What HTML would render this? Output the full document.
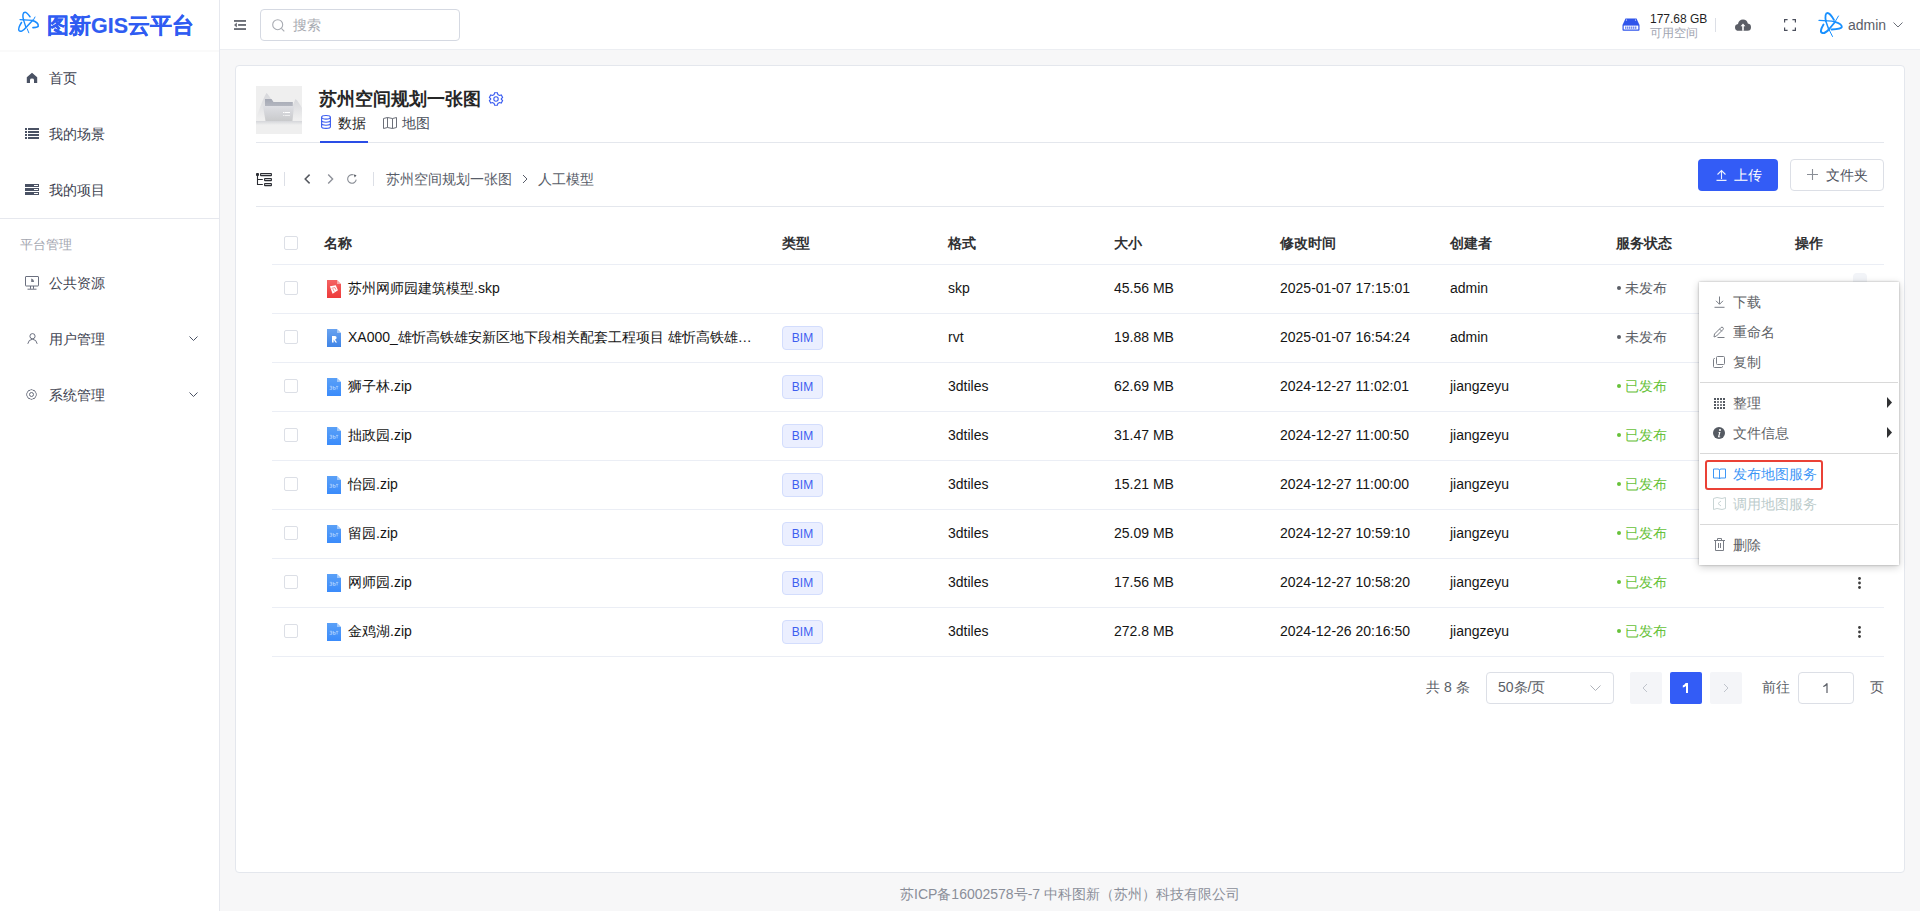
<!DOCTYPE html>
<html><head><meta charset="utf-8">
<style>
*{box-sizing:border-box;margin:0;padding:0}
html,body{width:1920px;height:911px;overflow:hidden}
body{position:relative;background:#f7f7f8;font-family:"Liberation Sans",sans-serif;font-size:14px;color:#303133}
.a{position:absolute}
.t{position:absolute;white-space:nowrap;line-height:20px}
svg{position:absolute;overflow:visible}
#side{left:0;top:0;width:220px;height:911px;background:#fff;border-right:1px solid #e6e8ee}
#hdr{left:220px;top:0;width:1700px;height:50px;background:#fff;border-bottom:1px solid #eceef2}
#card{left:235px;top:65px;width:1670px;height:808px;background:#fff;border:1px solid #e4e7ed;border-radius:4px}
.nav{color:#3d4250;font-size:14px}
.hline{position:absolute;height:1px;background:#ebeef5}
.cb{position:absolute;left:284px;width:14px;height:14px;border:1px solid #dcdfe6;border-radius:2px;background:#fff}
.th{position:absolute;top:233px;font-weight:bold;color:#303133;line-height:20px}
.td{position:absolute;line-height:20px;color:#151515;white-space:nowrap}
.tag{position:absolute;left:782px;width:41px;height:24px;background:#ebefff;border:1px solid #d3ddfd;border-radius:4px;color:#3d5ef0;font-size:12px;line-height:22px;text-align:center}
.dot{position:absolute;left:1617px;width:4px;height:4px;border-radius:2px}
.mi{position:absolute;left:1733px;color:#606266;line-height:20px;white-space:nowrap}
</style></head><body>

<!-- sidebar -->
<div id="side" class="a"></div>
<div class="a" style="left:0;top:50px;width:219px;height:2px;background:#fafafa"></div>
<div class="t" style="left:47px;top:12px;font-size:21.5px;line-height:28px;font-weight:bold;color:#2f5cf2;-webkit-text-stroke:0.15px #2f5cf2">图新GIS云平台</div>

<div class="t nav" style="left:49px;top:68px">首页</div>
<div class="t nav" style="left:49px;top:124px">我的场景</div>
<div class="t nav" style="left:49px;top:180px">我的项目</div>
<div class="a" style="left:0;top:218px;width:219px;height:1px;background:#e6e8ee"></div>
<div class="t" style="left:20px;top:235px;font-size:13px;color:#a3a6b0">平台管理</div>
<div class="t nav" style="left:49px;top:273px">公共资源</div>
<div class="t nav" style="left:49px;top:329px">用户管理</div>
<div class="t nav" style="left:49px;top:385px">系统管理</div>

<!-- header -->
<div id="hdr" class="a"></div>
<div class="a" style="left:260px;top:9px;width:200px;height:32px;border:1px solid #d5d9e2;border-radius:4px;background:#fff"></div>
<div class="t" style="left:293px;top:15px;color:#a8abb2">搜索</div>

<div class="t" style="left:1650px;top:11px;font-size:12px;line-height:16px;color:#1f1f1f">177.68 GB</div>
<div class="t" style="left:1650px;top:25px;font-size:12px;line-height:16px;color:#a0a4b0">可用空间</div>
<div class="a" style="left:1715px;top:18px;width:1px;height:14px;background:#dcdfe6"></div>
<div class="t" style="left:1848px;top:15px;color:#5a5e69">admin</div>

<!-- card -->
<div id="card" class="a"></div>
<div class="a" style="left:256px;top:86px;width:46px;height:48px;background:#efefef"></div>
<div class="t" style="left:319px;top:87px;font-size:18px;line-height:24px;font-weight:bold;color:#262626">苏州空间规划一张图</div>
<div class="t" style="left:338px;top:113px;color:#262626">数据</div>
<div class="t" style="left:402px;top:113px;color:#4a4f5c">地图</div>
<div class="hline" style="left:256px;top:142px;width:1628px;background:#e4e7ed"></div>
<div class="a" style="left:320px;top:141px;width:48px;height:2px;background:#2a4de6"></div>

<div class="a" style="left:284px;top:172px;width:1px;height:14px;background:#dcdfe6"></div>
<div class="a" style="left:373px;top:172px;width:1px;height:14px;background:#dcdfe6"></div>
<div class="t" style="left:386px;top:169px;color:#585d69">苏州空间规划一张图</div>
<div class="t" style="left:538px;top:169px;color:#585d69">人工模型</div>

<div class="a" style="left:1698px;top:159px;width:80px;height:32px;background:#335cf6;border-radius:4px"></div>
<div class="t" style="left:1734px;top:165px;color:#fff">上传</div>
<div class="a" style="left:1790px;top:159px;width:94px;height:32px;border:1px solid #dcdfe6;border-radius:4px"></div>
<div class="t" style="left:1826px;top:165px;color:#4d525e">文件夹</div>
<div class="hline" style="left:256px;top:206px;width:1628px;background:#e4e7ed"></div>

<!-- table -->
<div class="cb" style="top:236px"></div>
<div class="th" style="left:324px">名称</div>
<div class="th" style="left:782px">类型</div>
<div class="th" style="left:948px">格式</div>
<div class="th" style="left:1114px">大小</div>
<div class="th" style="left:1280px">修改时间</div>
<div class="th" style="left:1450px">创建者</div>
<div class="th" style="left:1616px">服务状态</div>
<div class="th" style="left:1795px">操作</div>
<div class="hline" style="left:272px;top:264px;width:1612px"></div>

<div class="cb" style="top:281px"></div>
<svg style="left:327px;top:280px" width="14" height="18" viewBox="0 0 14 18"><defs><linearGradient id="g0" x1="0" y1="0" x2="0" y2="1"><stop offset="0" stop-color="#f46363"/><stop offset="1" stop-color="#ee3a3a"/></linearGradient></defs><path d="M0 0 H10 L14 4 V18 H0 Z" fill="url(#g0)"/><path d="M10 0 L14 4 H10 Z" fill="#fff" opacity=".45"/><path d="M2.9 6.3 L8.8 5.2 L10.9 10.3 L5.6 13.8 Z" fill="#fff"/><path d="M4.6 8.3 L8 7.6 L9 9.8 M6 9.2 L7.2 11.6" fill="none" stroke="#f36b6b" stroke-width="0.8"/></svg>
<div class="td" style="left:348px;top:278px">苏州网师园建筑模型.skp</div>
<div class="td" style="left:948px;top:278px">skp</div>
<div class="td" style="left:1114px;top:278px">45.56 MB</div>
<div class="td" style="left:1280px;top:278px">2025-01-07 17:15:01</div>
<div class="td" style="left:1450px;top:278px">admin</div>
<div class="dot" style="top:286px;background:#5a5e66"></div>
<div class="td" style="left:1625px;top:278px;color:#5a5e66">未发布</div>
<svg style="left:1858px;top:283px" width="3" height="12" viewBox="0 0 3 12"><circle cx="1.5" cy="1.5" r="1.4" fill="#3c3c3c"/><circle cx="1.5" cy="6" r="1.4" fill="#3c3c3c"/><circle cx="1.5" cy="10.5" r="1.4" fill="#3c3c3c"/></svg>
<div class="hline" style="left:272px;top:313px;width:1612px"></div>
<div class="cb" style="top:330px"></div>
<svg style="left:327px;top:329px" width="14" height="18" viewBox="0 0 14 18"><defs><linearGradient id="g1" x1="0" y1="0" x2="0" y2="1"><stop offset="0" stop-color="#69a3f0"/><stop offset="1" stop-color="#3f84e6"/></linearGradient></defs><path d="M0 0 H10 L14 4 V18 H0 Z" fill="url(#g1)"/><path d="M10 0 L14 4 H10 Z" fill="#fff" opacity=".45"/><path d="M5 7 H8 Q9.6 7 9.6 8.8 Q9.6 10.3 8 10.5 L10 13.5 H8.4 L6.6 10.6 V13.5 H5 Z" fill="#fff"/></svg>
<div class="td" style="left:348px;top:327px">XA000_雄忻高铁雄安新区地下段相关配套工程项目 雄忻高铁雄…</div>
<div class="tag" style="top:326px">BIM</div>
<div class="td" style="left:948px;top:327px">rvt</div>
<div class="td" style="left:1114px;top:327px">19.88 MB</div>
<div class="td" style="left:1280px;top:327px">2025-01-07 16:54:24</div>
<div class="td" style="left:1450px;top:327px">admin</div>
<div class="dot" style="top:335px;background:#5a5e66"></div>
<div class="td" style="left:1625px;top:327px;color:#5a5e66">未发布</div>
<svg style="left:1858px;top:332px" width="3" height="12" viewBox="0 0 3 12"><circle cx="1.5" cy="1.5" r="1.4" fill="#3c3c3c"/><circle cx="1.5" cy="6" r="1.4" fill="#3c3c3c"/><circle cx="1.5" cy="10.5" r="1.4" fill="#3c3c3c"/></svg>
<div class="hline" style="left:272px;top:362px;width:1612px"></div>
<div class="cb" style="top:379px"></div>
<svg style="left:327px;top:378px" width="14" height="18" viewBox="0 0 14 18"><defs><linearGradient id="g2" x1="0" y1="0" x2="0" y2="1"><stop offset="0" stop-color="#5aa0f7"/><stop offset="1" stop-color="#3a8bfb"/></linearGradient></defs><path d="M0 0 H10 L14 4 V18 H0 Z" fill="url(#g2)"/><path d="M10 0 L14 4 H10 Z" fill="#fff" opacity=".45"/><path d="M2.8 8.3 H4.8 V11.4 H2.6 M3.4 9.8 H4.8 M6.3 8 V11.4 H8.3 V9.6 H6.3 M9 8.4 H11.3 M10.1 8.4 V11.4" stroke="#d6e8ff" stroke-width="0.9" fill="none" opacity=".6"/></svg>
<div class="td" style="left:348px;top:376px">狮子林.zip</div>
<div class="tag" style="top:375px">BIM</div>
<div class="td" style="left:948px;top:376px">3dtiles</div>
<div class="td" style="left:1114px;top:376px">62.69 MB</div>
<div class="td" style="left:1280px;top:376px">2024-12-27 11:02:01</div>
<div class="td" style="left:1450px;top:376px">jiangzeyu</div>
<div class="dot" style="top:384px;background:#67c23a"></div>
<div class="td" style="left:1625px;top:376px;color:#67c23a">已发布</div>
<svg style="left:1858px;top:381px" width="3" height="12" viewBox="0 0 3 12"><circle cx="1.5" cy="1.5" r="1.4" fill="#3c3c3c"/><circle cx="1.5" cy="6" r="1.4" fill="#3c3c3c"/><circle cx="1.5" cy="10.5" r="1.4" fill="#3c3c3c"/></svg>
<div class="hline" style="left:272px;top:411px;width:1612px"></div>
<div class="cb" style="top:428px"></div>
<svg style="left:327px;top:427px" width="14" height="18" viewBox="0 0 14 18"><defs><linearGradient id="g3" x1="0" y1="0" x2="0" y2="1"><stop offset="0" stop-color="#5aa0f7"/><stop offset="1" stop-color="#3a8bfb"/></linearGradient></defs><path d="M0 0 H10 L14 4 V18 H0 Z" fill="url(#g3)"/><path d="M10 0 L14 4 H10 Z" fill="#fff" opacity=".45"/><path d="M2.8 8.3 H4.8 V11.4 H2.6 M3.4 9.8 H4.8 M6.3 8 V11.4 H8.3 V9.6 H6.3 M9 8.4 H11.3 M10.1 8.4 V11.4" stroke="#d6e8ff" stroke-width="0.9" fill="none" opacity=".6"/></svg>
<div class="td" style="left:348px;top:425px">拙政园.zip</div>
<div class="tag" style="top:424px">BIM</div>
<div class="td" style="left:948px;top:425px">3dtiles</div>
<div class="td" style="left:1114px;top:425px">31.47 MB</div>
<div class="td" style="left:1280px;top:425px">2024-12-27 11:00:50</div>
<div class="td" style="left:1450px;top:425px">jiangzeyu</div>
<div class="dot" style="top:433px;background:#67c23a"></div>
<div class="td" style="left:1625px;top:425px;color:#67c23a">已发布</div>
<svg style="left:1858px;top:430px" width="3" height="12" viewBox="0 0 3 12"><circle cx="1.5" cy="1.5" r="1.4" fill="#3c3c3c"/><circle cx="1.5" cy="6" r="1.4" fill="#3c3c3c"/><circle cx="1.5" cy="10.5" r="1.4" fill="#3c3c3c"/></svg>
<div class="hline" style="left:272px;top:460px;width:1612px"></div>
<div class="cb" style="top:477px"></div>
<svg style="left:327px;top:476px" width="14" height="18" viewBox="0 0 14 18"><defs><linearGradient id="g4" x1="0" y1="0" x2="0" y2="1"><stop offset="0" stop-color="#5aa0f7"/><stop offset="1" stop-color="#3a8bfb"/></linearGradient></defs><path d="M0 0 H10 L14 4 V18 H0 Z" fill="url(#g4)"/><path d="M10 0 L14 4 H10 Z" fill="#fff" opacity=".45"/><path d="M2.8 8.3 H4.8 V11.4 H2.6 M3.4 9.8 H4.8 M6.3 8 V11.4 H8.3 V9.6 H6.3 M9 8.4 H11.3 M10.1 8.4 V11.4" stroke="#d6e8ff" stroke-width="0.9" fill="none" opacity=".6"/></svg>
<div class="td" style="left:348px;top:474px">怡园.zip</div>
<div class="tag" style="top:473px">BIM</div>
<div class="td" style="left:948px;top:474px">3dtiles</div>
<div class="td" style="left:1114px;top:474px">15.21 MB</div>
<div class="td" style="left:1280px;top:474px">2024-12-27 11:00:00</div>
<div class="td" style="left:1450px;top:474px">jiangzeyu</div>
<div class="dot" style="top:482px;background:#67c23a"></div>
<div class="td" style="left:1625px;top:474px;color:#67c23a">已发布</div>
<svg style="left:1858px;top:479px" width="3" height="12" viewBox="0 0 3 12"><circle cx="1.5" cy="1.5" r="1.4" fill="#3c3c3c"/><circle cx="1.5" cy="6" r="1.4" fill="#3c3c3c"/><circle cx="1.5" cy="10.5" r="1.4" fill="#3c3c3c"/></svg>
<div class="hline" style="left:272px;top:509px;width:1612px"></div>
<div class="cb" style="top:526px"></div>
<svg style="left:327px;top:525px" width="14" height="18" viewBox="0 0 14 18"><defs><linearGradient id="g5" x1="0" y1="0" x2="0" y2="1"><stop offset="0" stop-color="#5aa0f7"/><stop offset="1" stop-color="#3a8bfb"/></linearGradient></defs><path d="M0 0 H10 L14 4 V18 H0 Z" fill="url(#g5)"/><path d="M10 0 L14 4 H10 Z" fill="#fff" opacity=".45"/><path d="M2.8 8.3 H4.8 V11.4 H2.6 M3.4 9.8 H4.8 M6.3 8 V11.4 H8.3 V9.6 H6.3 M9 8.4 H11.3 M10.1 8.4 V11.4" stroke="#d6e8ff" stroke-width="0.9" fill="none" opacity=".6"/></svg>
<div class="td" style="left:348px;top:523px">留园.zip</div>
<div class="tag" style="top:522px">BIM</div>
<div class="td" style="left:948px;top:523px">3dtiles</div>
<div class="td" style="left:1114px;top:523px">25.09 MB</div>
<div class="td" style="left:1280px;top:523px">2024-12-27 10:59:10</div>
<div class="td" style="left:1450px;top:523px">jiangzeyu</div>
<div class="dot" style="top:531px;background:#67c23a"></div>
<div class="td" style="left:1625px;top:523px;color:#67c23a">已发布</div>
<svg style="left:1858px;top:528px" width="3" height="12" viewBox="0 0 3 12"><circle cx="1.5" cy="1.5" r="1.4" fill="#3c3c3c"/><circle cx="1.5" cy="6" r="1.4" fill="#3c3c3c"/><circle cx="1.5" cy="10.5" r="1.4" fill="#3c3c3c"/></svg>
<div class="hline" style="left:272px;top:558px;width:1612px"></div>
<div class="cb" style="top:575px"></div>
<svg style="left:327px;top:574px" width="14" height="18" viewBox="0 0 14 18"><defs><linearGradient id="g6" x1="0" y1="0" x2="0" y2="1"><stop offset="0" stop-color="#5aa0f7"/><stop offset="1" stop-color="#3a8bfb"/></linearGradient></defs><path d="M0 0 H10 L14 4 V18 H0 Z" fill="url(#g6)"/><path d="M10 0 L14 4 H10 Z" fill="#fff" opacity=".45"/><path d="M2.8 8.3 H4.8 V11.4 H2.6 M3.4 9.8 H4.8 M6.3 8 V11.4 H8.3 V9.6 H6.3 M9 8.4 H11.3 M10.1 8.4 V11.4" stroke="#d6e8ff" stroke-width="0.9" fill="none" opacity=".6"/></svg>
<div class="td" style="left:348px;top:572px">网师园.zip</div>
<div class="tag" style="top:571px">BIM</div>
<div class="td" style="left:948px;top:572px">3dtiles</div>
<div class="td" style="left:1114px;top:572px">17.56 MB</div>
<div class="td" style="left:1280px;top:572px">2024-12-27 10:58:20</div>
<div class="td" style="left:1450px;top:572px">jiangzeyu</div>
<div class="dot" style="top:580px;background:#67c23a"></div>
<div class="td" style="left:1625px;top:572px;color:#67c23a">已发布</div>
<svg style="left:1858px;top:577px" width="3" height="12" viewBox="0 0 3 12"><circle cx="1.5" cy="1.5" r="1.4" fill="#3c3c3c"/><circle cx="1.5" cy="6" r="1.4" fill="#3c3c3c"/><circle cx="1.5" cy="10.5" r="1.4" fill="#3c3c3c"/></svg>
<div class="hline" style="left:272px;top:607px;width:1612px"></div>
<div class="cb" style="top:624px"></div>
<svg style="left:327px;top:623px" width="14" height="18" viewBox="0 0 14 18"><defs><linearGradient id="g7" x1="0" y1="0" x2="0" y2="1"><stop offset="0" stop-color="#5aa0f7"/><stop offset="1" stop-color="#3a8bfb"/></linearGradient></defs><path d="M0 0 H10 L14 4 V18 H0 Z" fill="url(#g7)"/><path d="M10 0 L14 4 H10 Z" fill="#fff" opacity=".45"/><path d="M2.8 8.3 H4.8 V11.4 H2.6 M3.4 9.8 H4.8 M6.3 8 V11.4 H8.3 V9.6 H6.3 M9 8.4 H11.3 M10.1 8.4 V11.4" stroke="#d6e8ff" stroke-width="0.9" fill="none" opacity=".6"/></svg>
<div class="td" style="left:348px;top:621px">金鸡湖.zip</div>
<div class="tag" style="top:620px">BIM</div>
<div class="td" style="left:948px;top:621px">3dtiles</div>
<div class="td" style="left:1114px;top:621px">272.8 MB</div>
<div class="td" style="left:1280px;top:621px">2024-12-26 20:16:50</div>
<div class="td" style="left:1450px;top:621px">jiangzeyu</div>
<div class="dot" style="top:629px;background:#67c23a"></div>
<div class="td" style="left:1625px;top:621px;color:#67c23a">已发布</div>
<svg style="left:1858px;top:626px" width="3" height="12" viewBox="0 0 3 12"><circle cx="1.5" cy="1.5" r="1.4" fill="#3c3c3c"/><circle cx="1.5" cy="6" r="1.4" fill="#3c3c3c"/><circle cx="1.5" cy="10.5" r="1.4" fill="#3c3c3c"/></svg>
<div class="hline" style="left:272px;top:656px;width:1612px"></div>

<!-- ===== icons sidebar ===== -->
<svg style="left:13px;top:7px" width="32" height="32" viewBox="0 0 32 32">
 <g fill="none" stroke="#1a8cff" stroke-linecap="round">
  <path d="M10.5 13 C9.5 9 9.5 5.5 12 5.3 C13.5 5.2 15 7 17 9.8" stroke-width="1.5"/>
  <path d="M7 12.6 L19.5 13.4" stroke-width="1.2"/>
  <path d="M10.5 12.8 L12.8 20" stroke-width="1.3"/>
  <path d="M19.5 13.5 L13 20.5 C10.5 23.5 7.5 25.5 6 23.5 C5 22 6 19.5 8.5 15.5" stroke-width="1.5"/>
  <path d="M19.5 13.5 C23 14.5 26 17 25.2 19.2 C24.7 20.5 22.5 20.5 20 20.6" stroke-width="1.7"/>
  <path d="M20.5 12.8 L22 10" stroke-width="1"/>
  <path d="M14.2 21.8 L15.8 25.8" stroke-width="1"/>
 </g>
</svg>
<svg style="left:26px;top:72px" width="12" height="12" viewBox="0 0 12 12"><path d="M6 0.8 L11.2 5.2 V11 H8 V8 Q8 6.6 6 6.6 Q4 6.6 4 8 V11 H0.8 V5.2 Z" fill="#4a5264"/></svg>
<svg style="left:25px;top:128px" width="14" height="11" viewBox="0 0 14 11"><g fill="#4a5264"><rect x="0" y="0" width="2" height="2"/><rect x="3" y="0" width="11" height="2"/><rect x="0" y="3" width="2" height="2"/><rect x="3" y="3" width="11" height="2"/><rect x="0" y="6" width="2" height="2"/><rect x="3" y="6" width="11" height="2"/><rect x="0" y="9" width="2" height="2"/><rect x="3" y="9" width="11" height="2"/></g></svg>
<svg style="left:25px;top:184px" width="14" height="11" viewBox="0 0 14 11"><g fill="#4a5264"><rect x="0" y="0" width="14" height="3"/><rect x="0" y="4" width="14" height="3"/><rect x="0" y="8" width="14" height="3"/></g><g fill="#fff"><rect x="9" y="1" width="4" height="1"/><rect x="9" y="5" width="4" height="1"/><rect x="9" y="9" width="4" height="1"/></g></svg>
<svg style="left:25px;top:276px" width="14" height="14" viewBox="0 0 14 14"><g fill="none" stroke="#5a6070" stroke-width="0.9"><rect x="0.5" y="0.5" width="13" height="9.5" rx=".5"/><path d="M5.5 10 V12.8 M8.5 10 V12.8 M2.5 13.2 H11.5"/></g><path d="M6.2 2.6 V6 H9 Q9 3.2 6.2 2.6Z" fill="#5a6070" opacity=".85"/></svg>
<svg style="left:27px;top:333px" width="11" height="11" viewBox="0 0 11 11"><g fill="none" stroke="#5a6070" stroke-width="0.9"><circle cx="5.5" cy="3.2" r="2.6"/><path d="M0.8 10.8 Q1.5 6.5 5.5 6.2 Q9.5 6.5 10.2 10.8"/></g></svg>
<svg style="left:26px;top:389px" width="11" height="11" viewBox="0 0 11 11"><g fill="none" stroke="#5a6070" stroke-width="0.9"><path d="M5.5 0.6 Q6.6 0.6 7 1.4 Q8.3 1.2 9 2 Q9.2 3 9.7 3.6 Q10.4 4.4 10.4 5.5 Q10.4 6.6 9.7 7.4 Q9.2 8 9 9 Q8.3 9.8 7 9.6 Q6.6 10.4 5.5 10.4 Q4.4 10.4 4 9.6 Q2.7 9.8 2 9 Q1.8 8 1.3 7.4 Q0.6 6.6 0.6 5.5 Q0.6 4.4 1.3 3.6 Q1.8 3 2 2 Q2.7 1.2 4 1.4 Q4.4 0.6 5.5 0.6Z"/><circle cx="5.5" cy="5.5" r="2"/></g></svg>
<svg style="left:189px;top:336px" width="9" height="5" viewBox="0 0 9 5"><path d="M0.5 0.5 L4.5 4.5 L8.5 0.5" fill="none" stroke="#4a5264" stroke-width="1"/></svg>
<svg style="left:189px;top:392px" width="9" height="5" viewBox="0 0 9 5"><path d="M0.5 0.5 L4.5 4.5 L8.5 0.5" fill="none" stroke="#4a5264" stroke-width="1"/></svg>

<!-- ===== header icons ===== -->
<svg style="left:234px;top:19px" width="12" height="12" viewBox="0 0 12 12"><g fill="#6b6e76"><rect x="0" y="1" width="12" height="1.9"/><rect x="4.1" y="5" width="7.9" height="1.9"/><rect x="0" y="9.1" width="12" height="1.9"/><path d="M0 6 L2.9 3.6 V8.4 Z"/></g></svg>
<svg style="left:272px;top:19px" width="13" height="13" viewBox="0 0 13 13"><g fill="none" stroke="#a8abb2" stroke-width="1.1"><circle cx="5.7" cy="5.7" r="5"/><path d="M9.4 9.4 L12.3 12.3"/></g></svg>
<svg style="left:1622px;top:18px" width="18" height="13" viewBox="0 0 18 13"><path d="M3.5 0.5 H14.5 L17.5 7 V12 Q17.5 12.8 16.5 12.8 H1.5 Q0.5 12.8 0.5 12 V7 Z" fill="#2f54eb"/><rect x="1.7" y="7.6" width="14.6" height="3.9" fill="#fff"/><g fill="#2f54eb"><rect x="3.3" y="8.5" width="1" height="2.3"/><rect x="5.3" y="8.5" width="1" height="2.3"/><rect x="7.3" y="8.5" width="1" height="2.3"/><rect x="9.3" y="8.5" width="1" height="2.3"/><rect x="11.3" y="8.5" width="1" height="2.3"/><rect x="13.3" y="8.5" width="1" height="2.3"/></g><g fill="#fff"><circle cx="4.5" cy="2" r=".6"/><circle cx="13.5" cy="2" r=".6"/></g></svg>
<svg style="left:1735px;top:19px" width="16" height="12" viewBox="0 0 16 12"><path d="M4 11.8 Q0 11.8 0 8.4 Q0 5.5 3 5 Q3.8 0.5 8 0.5 Q12 0.5 12.8 4.6 Q16 5 16 8.2 Q16 11.8 12.5 11.8 Z" fill="#5b5e66"/><path d="M8 4.5 L5.6 7.3 H7.2 V11.8 H8.8 V7.3 H10.4 Z" fill="#fff"/></svg>
<svg style="left:1784px;top:19px" width="12" height="12" viewBox="0 0 12 12"><g fill="none" stroke="#4a4f5c" stroke-width="1.2"><path d="M0.6 3.6 V0.6 H3.6 M8.4 0.6 H11.4 V3.6 M11.4 8.4 V11.4 H8.4 M3.6 11.4 H0.6 V8.4"/></g></svg>
<svg style="left:1815px;top:8px" width="32" height="32" viewBox="0 0 32 32">
 <g fill="none" stroke="#1890ff" stroke-linecap="round">
  <path d="M10.8 13 C10 8 10.5 5 12.5 5 C14.5 5 17 8.5 19 12" stroke-width="1.8"/>
  <path d="M4 12.4 C10 12.5 16 13 20 13.8" stroke-width="1.2"/>
  <path d="M20 13.8 C24 15 27 17 26.8 19 C26.5 20.5 22 21.2 16.5 21.5" stroke-width="1.9"/>
  <path d="M10.6 12.5 L13.8 21.5" stroke-width="1.5"/>
  <path d="M20 14 L14.2 21 C12 23.5 9.5 25.5 7.5 25 C5 24.5 5.5 21.5 8.5 16.5" stroke-width="1.9"/>
  <path d="M14 21.5 L17.5 28.5" stroke-width="1"/>
  <path d="M20.5 13 L23.5 8" stroke-width="1"/>
 </g>
</svg>
<svg style="left:1893px;top:22px" width="10" height="6" viewBox="0 0 10 6"><path d="M0.5 0.5 L5 5 L9.5 0.5" fill="none" stroke="#6b6f78" stroke-width="1"/></svg>

<!-- ===== card header ===== -->
<svg style="left:256px;top:86px" width="46" height="48" viewBox="0 0 46 48">
 <rect width="46" height="48" fill="#efefef"/>
 <defs><linearGradient id="mt" x1="0" y1="0" x2="0" y2="1"><stop offset="0" stop-color="#d6d7db"/><stop offset="1" stop-color="#efefef"/></linearGradient>
 <linearGradient id="ff" x1="0" y1="0" x2="0" y2="1"><stop offset="0" stop-color="#dedfe4"/><stop offset="1" stop-color="#c8c9cb"/></linearGradient>
 <linearGradient id="fb" x1="0" y1="0" x2="0" y2="1"><stop offset="0" stop-color="#a4a8b4"/><stop offset="1" stop-color="#b4b7c0"/></linearGradient>
 <linearGradient id="gb" x1="0" y1="0" x2="0" y2="1"><stop offset="0" stop-color="#d5d6da"/><stop offset="1" stop-color="#efefef"/></linearGradient></defs>
 <path d="M1 30 Q7 12 10.5 7 Q12.5 8 19 20 V33 H1Z" fill="url(#mt)"/>
 <path d="M31 33 L39.5 13 Q42 15 46 22 V33Z" fill="url(#mt)"/>
 <path d="M9 13 H15.5 L17.5 16 H36.8 V20 H9Z" fill="url(#fb)"/>
 <path d="M7 20 H38 L36.4 35.5 H9.6Z" fill="url(#ff)"/>
 <rect x="0" y="35" width="46" height="4" fill="url(#gb)"/>
 <g fill="#fff"><rect x="27" y="26" width="1" height="1"/><rect x="28.5" y="26" width="5.5" height="1"/><rect x="27" y="29" width="1" height="1" opacity=".6"/><rect x="28.5" y="29" width="5.5" height="1" opacity=".6"/></g>
</svg>
<svg style="left:489px;top:92px" width="14" height="14" viewBox="0 0 14 14"><g fill="none" stroke="#3a5cf0" stroke-width="1.1"><path d="M5.6 0.8 H8.4 L8.9 2.6 L10.5 3.5 L12.3 3 L13.6 5.4 L12.3 6.8 V7.2 L13.6 8.6 L12.3 11 L10.5 10.5 L8.9 11.4 L8.4 13.2 H5.6 L5.1 11.4 L3.5 10.5 L1.7 11 L0.4 8.6 L1.7 7.2 V6.8 L0.4 5.4 L1.7 3 L3.5 3.5 L5.1 2.6 Z"/><circle cx="7" cy="7" r="2.2"/></g></svg>
<svg style="left:321px;top:115px" width="10" height="14" viewBox="0 0 10 14"><g fill="none" stroke="#3a5cf0" stroke-width="1.1"><ellipse cx="5" cy="2.3" rx="4.4" ry="1.8"/><path d="M0.6 2.3 V11.7 Q0.6 13.4 5 13.4 Q9.4 13.4 9.4 11.7 V2.3"/><path d="M0.6 5.5 Q0.6 7.2 5 7.2 Q9.4 7.2 9.4 5.5 M0.6 8.6 Q0.6 10.3 5 10.3 Q9.4 10.3 9.4 8.6"/></g></svg>
<svg style="left:383px;top:117px" width="14" height="12" viewBox="0 0 14 12"><g fill="none" stroke="#6b6f78" stroke-width="1"><path d="M0.5 1.5 L4.5 0.5 L9.5 1.5 L13.5 0.5 V10.5 L9.5 11.5 L4.5 10.5 L0.5 11.5 Z M4.5 0.5 V10.5 M9.5 1.5 V11.5"/></g></svg>

<!-- toolbar icons -->
<svg style="left:256px;top:173px" width="16" height="13" viewBox="0 0 16 13"><g fill="none" stroke="#2b2d33" stroke-width="1.1"><path d="M1.5 2 V11.5 H6.8 M1.5 6.5 H6.8"/><rect x="4.6" y="0.6" width="10.8" height="2" rx=".3"/><rect x="8.6" y="5.6" width="6.8" height="2" rx=".3"/><rect x="8.6" y="10.6" width="6.8" height="2" rx=".3"/></g><rect x="0" y="0" width="3" height="3" rx=".9" fill="#2b2d33"/></svg>
<svg style="left:304px;top:174px" width="7" height="11" viewBox="0 0 7 11"><path d="M5.6 0.6 L1.2 5 L5.6 9.4" fill="none" stroke="#55585f" stroke-width="1.5"/></svg>
<svg style="left:327px;top:174px" width="7" height="11" viewBox="0 0 7 11"><path d="M1.2 0.6 L5.6 5 L1.2 9.4" fill="none" stroke="#8e9199" stroke-width="1.4"/></svg>
<svg style="left:347px;top:174px" width="11" height="11" viewBox="0 0 11 11"><path d="M9.2 5.6 A4.3 4.3 0 1 1 6.2 0.8" fill="none" stroke="#8a8e96" stroke-width="1.1"/><path d="M6.4 0.2 L9.5 1.2 L7.8 3.6 Z" fill="#5e626a"/></svg>
<svg style="left:522px;top:174px" width="6" height="10" viewBox="0 0 6 10"><path d="M1 1 L5 5 L1 9" fill="none" stroke="#585d69" stroke-width="1"/></svg>
<svg style="left:1716px;top:169px" width="11" height="12" viewBox="0 0 11 12"><g fill="none" stroke="#fff" stroke-width="1.1" opacity=".9"><path d="M5.5 10 V2 M1.5 5.5 L5.5 1.5 L9.5 5.5 M0.5 11.4 H10.5"/></g></svg>
<svg style="left:1807px;top:169px" width="11" height="11" viewBox="0 0 11 11"><path d="M5.5 0 V11 M0 5.5 H11" fill="none" stroke="#8a8e96" stroke-width="1.1"/></svg>

<!-- hovered action bg row1 -->
<div class="a" style="left:1853px;top:273px;width:14px;height:30px;background:#f2f4f8;border-radius:4px"></div>


<!-- ===== pagination ===== -->
<div class="t" style="left:1426px;top:677px;color:#5a5e66">共 8 条</div>
<div class="a" style="left:1486px;top:672px;width:128px;height:32px;border:1px solid #dcdfe6;border-radius:4px;background:#fff"></div>
<div class="t" style="left:1498px;top:677px;color:#5a5e66">50条/页</div>
<svg style="left:1590px;top:685px" width="11" height="6" viewBox="0 0 11 6"><path d="M0.5 0.5 L5.5 5.5 L10.5 0.5" fill="none" stroke="#b0b3ba" stroke-width="1"/></svg>
<div class="a" style="left:1630px;top:672px;width:32px;height:32px;background:#f4f5f8;border-radius:2px"></div>
<svg style="left:1642px;top:683px" width="6" height="10" viewBox="0 0 6 10"><path d="M5 1 L1 5 L5 9" fill="none" stroke="#c0c4cc" stroke-width="1"/></svg>
<div class="a" style="left:1670px;top:672px;width:32px;height:32px;background:#335cf6;border-radius:2px"></div>
<svg style="left:1682px;top:683px" width="7" height="10" viewBox="0 0 7 10"><path d="M3.6 0 H6 V10 H4 V2.9 Q2.6 3.9 0.8 4.4 V2.6 Q2.8 1.8 3.6 0 Z" fill="#fff"/></svg>
<div class="a" style="left:1710px;top:672px;width:32px;height:32px;background:#f4f5f8;border-radius:2px"></div>
<svg style="left:1723px;top:683px" width="6" height="10" viewBox="0 0 6 10"><path d="M1 1 L5 5 L1 9" fill="none" stroke="#c0c4cc" stroke-width="1"/></svg>
<div class="t" style="left:1762px;top:677px;color:#5a5e66">前往</div>
<div class="a" style="left:1798px;top:672px;width:56px;height:32px;border:1px solid #dcdfe6;border-radius:4px;background:#fff"></div>
<svg style="left:1822px;top:683px" width="7" height="10" viewBox="0 0 7 10"><path d="M4.4 0.2 H5.6 V10 H4.4 V2.4 Q3 3.5 1.2 4 V2.9 Q3.4 2 4.4 0.2 Z" fill="#5a5e66"/></svg>
<div class="t" style="left:1870px;top:677px;color:#5a5e66">页</div>

<!-- footer -->
<div class="t" style="left:0;top:884px;width:2140px;text-align:center;font-size:14px;color:#8a8e99">苏ICP备16002578号-7 中科图新（苏州）科技有限公司</div>

<!-- ===== context menu ===== -->
<div class="a" style="left:1699px;top:282px;width:200px;height:283px;background:#fff;box-shadow:0 0 2px rgba(0,0,0,.28),0 2px 8px rgba(0,0,0,.2)"></div>
<div class="a" style="left:1700px;top:382px;width:198px;height:1px;background:#d9d9d9"></div>
<div class="a" style="left:1700px;top:453px;width:198px;height:1px;background:#d9d9d9"></div>
<div class="a" style="left:1700px;top:524px;width:198px;height:1px;background:#d9d9d9"></div>
<div class="mi" style="top:292px">下载</div>
<div class="mi" style="top:322px">重命名</div>
<div class="mi" style="top:352px">复制</div>
<div class="mi" style="top:393px">整理</div>
<div class="mi" style="top:423px">文件信息</div>
<div class="mi" style="top:464px;color:#3f97f6">发布地图服务</div>
<div class="mi" style="top:494px;color:#bccccc">调用地图服务</div>
<div class="mi" style="top:535px">删除</div>
<div class="a" style="left:1705px;top:460px;width:118px;height:30px;border:2.6px solid #ea4136;border-radius:3px"></div>
<svg style="left:1714px;top:296px" width="11" height="12" viewBox="0 0 11 12"><path d="M5.5 0.5 V8 M2 4.8 L5.5 8.3 L9 4.8 M0.5 11.3 H10.5" fill="none" stroke="#7a7e86" stroke-width="1"/></svg>
<svg style="left:1713px;top:326px" width="12" height="12" viewBox="0 0 12 12"><g fill="none" stroke="#7a7e86" stroke-width="1"><path d="M1 11 L1.5 8 L8 1.5 Q9 0.7 10 1.6 Q10.8 2.5 10 3.5 L3.5 10 Z M6.5 3 L8.8 5.3"/><path d="M4.5 11.5 H11.5"/></g></svg>
<svg style="left:1713px;top:356px" width="12" height="12" viewBox="0 0 12 12"><g fill="none" stroke="#7a7e86" stroke-width="1"><rect x="3.5" y="0.5" width="8" height="8" rx="1"/><path d="M2 2.5 H1.5 Q0.5 2.5 0.5 3.5 V10.5 Q0.5 11.5 1.5 11.5 H8.5 Q9.5 11.5 9.5 10.5 V10"/></g></svg>
<svg style="left:1714px;top:398px" width="11" height="11" viewBox="0 0 11 11"><g fill="#555a62"><rect x="0" y="0" width="2" height="2" opacity="1"/><rect x="3" y="0" width="2" height="2" opacity="1"/><rect x="6" y="0" width="2" height="2" opacity="1"/><rect x="9" y="0" width="2" height="2" opacity="1"/><rect x="0" y="3" width="2" height="2" opacity="1"/><rect x="3" y="3" width="2" height="2" opacity=".75"/><rect x="6" y="3" width="2" height="2" opacity=".75"/><rect x="9" y="3" width="2" height="2" opacity="1"/><rect x="0" y="6" width="2" height="2" opacity="1"/><rect x="3" y="6" width="2" height="2" opacity=".75"/><rect x="6" y="6" width="2" height="2" opacity=".75"/><rect x="9" y="6" width="2" height="2" opacity="1"/><rect x="0" y="9" width="2" height="2" opacity="1"/><rect x="3" y="9" width="2" height="2" opacity="1"/><rect x="6" y="9" width="2" height="2" opacity="1"/><rect x="9" y="9" width="2" height="2" opacity="1"/></g></svg>
<svg style="left:1713px;top:427px" width="12" height="12" viewBox="0 0 12 12"><circle cx="6" cy="6" r="6" fill="#555a62"/><circle cx="7" cy="3" r="1" fill="#fff"/><path d="M5.6 5 H7.5 L6.3 9.6 H7.3 L7.1 10.3 H4.9 L6.1 5.7 H5.4 Z" fill="#fff"/></svg>
<svg style="left:1887px;top:397px" width="5" height="11" viewBox="0 0 5 11"><path d="M0 0 L5 5.5 L0 11Z" fill="#303133"/></svg>
<svg style="left:1887px;top:427px" width="5" height="11" viewBox="0 0 5 11"><path d="M0 0 L5 5.5 L0 11Z" fill="#303133"/></svg>
<svg style="left:1713px;top:468px" width="13" height="12" viewBox="0 0 13 12"><g fill="none" stroke="#3f97f6" stroke-width="1"><path d="M0.5 1 H5 Q6.5 1 6.5 2.5 V11 Q6.5 10 5 10 H0.5 Z M12.5 1 H8 Q6.5 1 6.5 2.5 V11 Q6.5 10 8 10 H12.5 Z"/></g></svg>
<svg style="left:1713px;top:497px" width="13" height="13" viewBox="0 0 13 13"><g fill="none" stroke="#c8d4d4" stroke-width="1"><path d="M0.5 1.5 L4 0.5 L9 1.5 L12.5 0.5 V11.5 L9 12.5 L4 11.5 L0.5 12.5 Z"/><path d="M8 4 L5 6.5 L8 9"/></g></svg>
<svg style="left:1714px;top:538px" width="11" height="13" viewBox="0 0 11 13"><g fill="none" stroke="#7a7e86" stroke-width="1"><path d="M0 2.5 H11 M3.5 2.5 V0.5 H7.5 V2.5 M1.5 2.5 V12.5 H9.5 V2.5 M4.5 5 V10 M6.5 5 V10"/></g></svg>


</body></html>
